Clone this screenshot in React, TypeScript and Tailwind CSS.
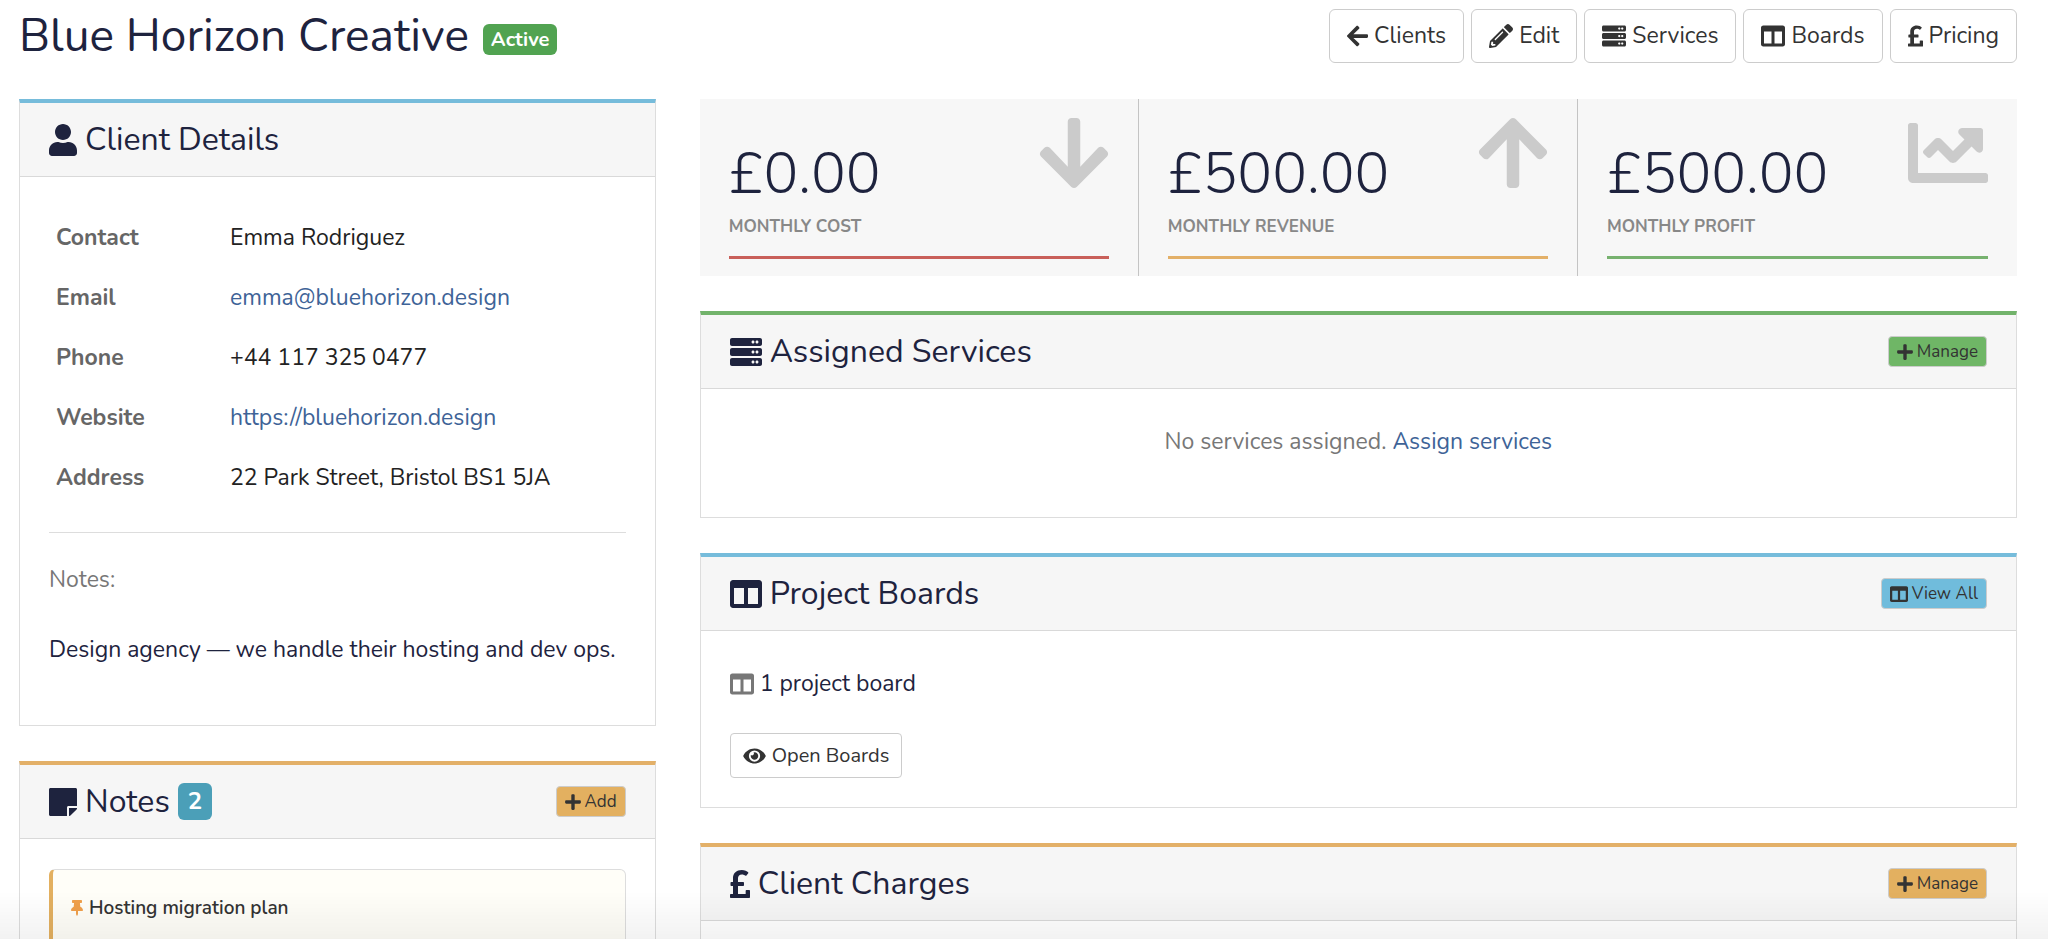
import React from "react";
import {
  FaArrowDown,
  FaArrowLeft,
  FaArrowUp,
  FaChartLine,
  FaColumns,
  FaEye,
  FaPencilAlt,
  FaPlus,
  FaPoundSign,
  FaServer,
  FaStickyNote,
  FaThumbtack,
  FaUser,
} from "react-icons/fa";

interface PanelProps {
  title: string;
  icon: React.ReactNode;
  accent: string;
  badge?: React.ReactNode;
  action?: React.ReactNode;
  children?: React.ReactNode;
}

const Panel = ({ title, icon, accent, badge, action, children }: PanelProps) => {
  return (
    <section className={`border border-[#ddd] border-t-4 bg-white ${accent}`}>
      <header className="flex h-[74px] items-center justify-between border-b border-[#d9d9d9] bg-[#f6f6f6] px-[29px]">
        <h3 className="flex items-center gap-2 text-[32px] leading-10 text-[#1e233e]">
          {icon}
          {title}
          {badge}
        </h3>
        {action}
      </header>
      {children}
    </section>
  );
};

const SmallButton = ({
  color,
  icon,
  label,
}: {
  color: string;
  icon: React.ReactNode;
  label: string;
}) => (
  <button
    className={`flex h-[31px] cursor-pointer items-center gap-1 rounded border border-[#ccc] px-2 text-[17px] leading-6 text-[#333] ${color}`}
  >
    {icon}
    {label}
  </button>
);

const navItems = [
  { label: "Clients", icon: <FaArrowLeft className="h-6 w-[21px]" /> },
  { label: "Edit", icon: <FaPencilAlt className="h-6 w-6" /> },
  { label: "Services", icon: <FaServer className="h-6 w-6" /> },
  { label: "Boards", icon: <FaColumns className="h-6 w-6" /> },
  { label: "Pricing", icon: <FaPoundSign className="h-6 w-[15px]" /> },
];

const details = [
  { label: "Contact", value: "Emma Rodriguez" },
  {
    label: "Email",
    value: "emma@bluehorizon.design",
    href: "mailto:emma@bluehorizon.design",
  },
  { label: "Phone", value: "+44 117 325 0477" },
  {
    label: "Website",
    value: "https://bluehorizon.design",
    href: "https://bluehorizon.design",
  },
  { label: "Address", value: "22 Park Street, Bristol BS1 5JA" },
];

const stats = [
  {
    label: "Monthly Cost",
    value: "£0.00",
    line: "bg-[#c9605a]",
    icon: <FaArrowDown className="h-20 w-[70px]" />,
  },
  {
    label: "Monthly Revenue",
    value: "£500.00",
    line: "bg-[#e3b068]",
    icon: <FaArrowUp className="h-20 w-[70px]" />,
  },
  {
    label: "Monthly Profit",
    value: "£500.00",
    line: "bg-[#77b26f]",
    icon: <FaChartLine className="h-20 w-20" />,
  },
];

const App = () => {
  return (
    <div className="h-screen overflow-hidden bg-white pr-[31px] pl-[19px] font-['Nunito','Lato',sans-serif] text-[23px] leading-8 text-[#1e233e]">
      <div className="flex items-start justify-between pt-[9px]">
        <div className="flex items-center gap-[14px]">
          <h1 className="text-[46px] leading-[54px]">Blue Horizon Creative</h1>
          <span className="mt-1.5 rounded-md bg-[#51a351] px-2 text-[20px] leading-[31px] font-bold text-white">
            Active
          </span>
        </div>

        <nav className="flex gap-[7px]">
          {navItems.map((item) => (
            <button
              key={item.label}
              className="flex h-[54px] cursor-pointer items-center gap-[6px] rounded-md border border-[#ccc] px-[17px] text-[#333]"
            >
              {item.icon}
              {item.label}
            </button>
          ))}
        </nav>
      </div>

      <div className="mt-9 grid grid-cols-12 items-start gap-x-11">
        <div className="col-span-4 flex flex-col gap-[35px]">
          <Panel
            title="Client Details"
            icon={<FaUser className="h-8 w-7" />}
            accent="border-t-[#76bcdb]"
          >
            <div className="px-[29px] pt-[31px] pb-[59px]">
              <table className="w-full">
                <tbody>
                  {details.map((row) => (
                    <tr key={row.label} className="h-[60px]">
                      <th
                        scope="row"
                        className="w-[181px] pl-[7px] text-left font-bold text-[#666]"
                      >
                        {row.label}
                      </th>
                      <td className="text-[#222]">
                        {row.href ? (
                          <a href={row.href} className="text-[#3e6397]">
                            {row.value}
                          </a>
                        ) : (
                          row.value
                        )}
                      </td>
                    </tr>
                  ))}
                </tbody>
              </table>
              <hr className="mt-6 border-[#ddd]" />
              <p className="mt-[31px] text-[#777]">Notes:</p>
              <p className="mt-[38px]">
                Design agency — we handle their hosting and dev ops.
              </p>
            </div>
          </Panel>

          <Panel
            title="Notes"
            icon={<FaStickyNote className="h-8 w-7" />}
            accent="border-t-[#e3b068]"
            badge={
              <span className="rounded-md bg-[#4b9fb8] px-[10px] text-[24px] leading-[37px] font-bold text-white">
                2
              </span>
            }
            action={
              <SmallButton
                color="bg-[#e3b060]"
                icon={<FaPlus className="h-[18px] w-4" />}
                label="Add"
              />
            }
          >
            <div className="px-[29px] py-[30px]">
              <article className="rounded-md border border-l-4 border-[#ddd] border-l-[#e3b060] bg-[#fffef8] px-[18px] py-[22px]">
                <h4 className="flex items-center gap-[6px] text-[19px] font-semibold text-[#333]">
                  <FaThumbtack className="h-4 w-3 text-[#f0a04b]" />
                  Hosting migration plan
                </h4>
                <div className="h-8" />
              </article>
            </div>
          </Panel>
        </div>

        <div className="col-span-8 flex flex-col gap-[35px]">
          <div className="grid grid-cols-3 divide-x divide-[#c4c4c4] bg-[#f7f7f7]">
            {stats.map((stat) => (
              <div key={stat.label} className="px-[29px] pb-[17px]">
                <div className="flex h-28 justify-between">
                  <p className="self-end text-[58px] leading-[74px] font-light">
                    {stat.value}
                  </p>
                  <span className="mt-[14px] text-[#cbcbcb]">{stat.icon}</span>
                </div>
                <p className="mt-1 text-[17px] leading-6 font-bold text-[#888] uppercase">
                  {stat.label}
                </p>
                <div className={`mt-[17px] h-[3px] ${stat.line}`} />
              </div>
            ))}
          </div>

          <Panel
            title="Assigned Services"
            icon={<FaServer className="h-8 w-8" />}
            accent="border-t-[#72b36b]"
            action={
              <SmallButton
                color="bg-[#6fb666]"
                icon={<FaPlus className="h-[18px] w-4" />}
                label="Manage"
              />
            }
          >
            <p className="px-[29px] pt-[37px] pb-[59px] text-center text-[#777]">
              No services assigned.{" "}
              <a href="#services" className="text-[#3e6397]">
                Assign services
              </a>
            </p>
          </Panel>

          <Panel
            title="Project Boards"
            icon={<FaColumns className="h-8 w-8" />}
            accent="border-t-[#76bcdb]"
            action={
              <SmallButton
                color="bg-[#70bcdc]"
                icon={<FaColumns className="h-[18px] w-[18px]" />}
                label="View All"
              />
            }
          >
            <div className="px-[29px] pt-[37px] pb-[29px]">
              <p className="flex items-center gap-[6px]">
                <FaColumns className="h-6 w-6 text-[#777]" />1 project board
              </p>
              <button className="mt-[33px] flex h-[45px] cursor-pointer items-center gap-[6px] rounded border border-[#ccc] px-3 text-[20px] text-[#333]">
                <FaEye className="h-5 w-[23px]" />
                Open Boards
              </button>
            </div>
          </Panel>

          <Panel
            title="Client Charges"
            icon={<FaPoundSign className="h-8 w-5" />}
            accent="border-t-[#e3b068]"
            action={
              <SmallButton
                color="bg-[#e3b060]"
                icon={<FaPlus className="h-[18px] w-4" />}
                label="Manage"
              />
            }
          >
            <div className="h-24" />
          </Panel>
        </div>
      </div>

      {/* fade at the bottom edge of the viewport */}
      <div className="pointer-events-none fixed inset-x-0 bottom-0 h-12 bg-gradient-to-b from-transparent to-black/5" />
    </div>
  );
};

export default App;
